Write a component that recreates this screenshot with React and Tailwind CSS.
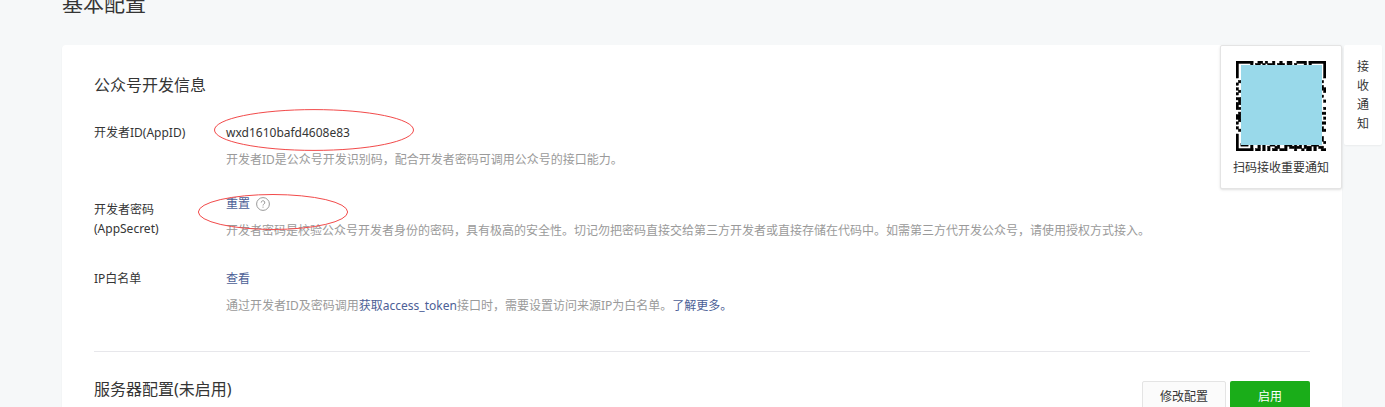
import React from "react";

// x, y, width, height on a 37x37 grid, the middle of the code is covered
const qrCells = [
  // top
  "0,0,7,1", "0,0,1,7", "6,0,1,2", "30,0,7,1", "36,0,1,7", "30,0,1,2",
  "9,0,2,1", "8,1,2,1", "11,1,1,1", "12,0,1,1", "13,1,2,1", "15,0,1,2", "17,1,1,1", "18,0,1,2",
  "19,1,1,1", "21,0,2,1", "21,1,1,1", "22,1,1,1", "25,0,4,1", "24,1,1,1", "28,1,1,1",
  // left
  "1,8,1,1", "0,9,1,1", "0,11,1,1", "1,12,1,1", "0,13,1,1", "0,15,2,1", "1,16,1,2", "0,17,1,3",
  "1,19,1,1", "1,21,1,1", "0,22,2,2", "0,25,1,1", "1,24,1,1", "0,27,1,1", "1,28,1,1",
  // right
  "35,8,1,1", "35,10,1,2", "36,11,1,2", "35,14,1,1", "36,16,1,1", "36,19,1,1", "35,21,2,1",
  "36,23,1,1", "35,25,2,1", "35,27,1,2", "36,28,1,1", "35,31,1,2", "36,33,1,1",
  // bottom
  "0,30,1,7", "0,36,7,1", "2,34,3,1", "6,30,1,7",
  "9,34,1,2", "8,36,2,1", "11,34,1,3", "13,35,1,2", "14,34,2,1", "15,36,2,1", "17,34,1,2", "16,35,1,1",
  "18,36,2,1", "20,34,1,3", "21,34,2,1", "22,35,2,1", "24,34,1,3", "25,35,1,1", "26,34,1,2",
  "27,36,1,1", "28,34,1,2", "29,35,2,2", "31,34,2,1", "32,35,1,2", "33,34,1,1", "34,35,2,1", "35,36,2,1",
];

const QrCode = () => (
  <svg viewBox="0 0 90 90" className="size-[90px]" aria-hidden="true">
    <g transform="scale(2.4324)" stroke="#000" strokeWidth="0.2">
      {qrCells.map((cell) => {
        const [x, y, w, h] = cell.split(",");
        return <rect key={cell} x={x} y={y} width={w} height={h} fill="#000" />;
      })}
    </g>
    <rect x="5" y="4" width="81" height="80" fill="#99d9ea" />
  </svg>
);

const Ellipse = ({ className }) => (
  <svg viewBox="0 0 200 42" preserveAspectRatio="none" className={className} aria-hidden="true">
    <ellipse cx="100" cy="21" rx="99.5" ry="20.4" fill="none" stroke="#f24a4a" vectorEffect="non-scaling-stroke" />
  </svg>
);

const Row = ({ label, children, hint, className = "items-start" }) => (
  <div className={`flex ${className}`}>
    <dt className="w-[132px] shrink-0 pt-0.5 leading-[19px]">{label}</dt>
    <dd className="relative grow">
      <div className="flex h-6 items-center gap-1.5">{children}</div>
      <p className="mt-[3px] leading-6 text-[#9a9a9a]">{hint}</p>
    </dd>
  </div>
);

const App = () => {
  return (
    <div
      lang="zh-CN"
      className="h-screen overflow-hidden bg-[#f6f8f9] font-['Noto_Sans','Noto_Sans_CJK_SC',sans-serif] text-xs text-[#353535]"
    >
      <div className="relative mr-[43px] ml-[62px]">
        <h1 className="-mt-3 h-[57px] text-[21px] leading-[30px]">基本配置</h1>

        <main className="rounded-sm bg-white px-8 pt-7 pb-8 shadow-xs">
          <h2 className="text-base leading-6">公众号开发信息</h2>

          <dl className="mt-6">
            <Row
              className="mb-5 items-start"
              label="开发者ID(AppID)"
              hint="开发者ID是公众号开发识别码，配合开发者密码可调用公众号的接口能力。"
            >
              <span>wxd1610bafd4608e83</span>
              <Ellipse className="absolute -top-3 -left-3 h-[42px] w-[200px]" />
            </Row>
            <Row
              className="mb-6 items-center"
              label={<>开发者密码<br />(AppSecret)</>}
              hint="开发者密码是校验公众号开发者身份的密码，具有极高的安全性。切记勿把密码直接交给第三方开发者或直接存储在代码中。如需第三方代开发公众号，请使用授权方式接入。"
            >
              <a href="#reset" className="text-[#4c6096]">重置</a>
              <svg viewBox="0 0 14 14" className="size-3.5" fill="none" stroke="#9a9a9a" aria-hidden="true">
                <circle cx="7" cy="7" r="6.4" />
                <path d="M5.2 5.6a1.8 1.8 0 1 1 2.7 1.5c-.6.4-.9.7-.9 1.4M7 9.6v1.1" />
              </svg>
              <Ellipse className="absolute top-0.5 -left-7 h-9 w-[150px]" />
            </Row>
            <Row
              label="IP白名单"
              hint={
                <>
                  通过开发者ID及密码调用<a href="#token" className="text-[#4c6096]">获取access_token</a>
                  接口时，需要设置访问来源IP为白名单。<a href="#more" className="text-[#4c6096]">了解更多。</a>
                </>
              }
            >
              <a href="#view" className="text-[#4c6096]">查看</a>
            </Row>
          </dl>

          <section className="mt-[33px] flex items-start justify-between border-t border-[#e7e7eb] pt-[29px]">
            <h2 className="text-base leading-4">服务器配置(未启用)</h2>
            <div className="flex gap-1">
              <button className="h-8 w-[84px] rounded-xs border border-[#e4e4e4] bg-[#fbfbfb]">修改配置</button>
              <button className="h-8 w-20 rounded-xs bg-[#1aad19] text-white">启用</button>
            </div>
          </section>
        </main>

        <aside className="absolute top-[57px] -right-10 flex items-start gap-0.5">
          <div className="flex h-36 w-[122px] flex-col items-center rounded-xs border border-[#e4e4e4] bg-white pt-[15px] shadow-sm">
            <QrCode />
            <p className="mt-[9px] leading-4">扫码接收重要通知</p>
          </div>
          <div className="w-[38px] rounded-xs bg-white px-[13px] py-3 leading-[19px] shadow-xs">接收通知</div>
        </aside>
      </div>
    </div>
  );
};

export default App;
